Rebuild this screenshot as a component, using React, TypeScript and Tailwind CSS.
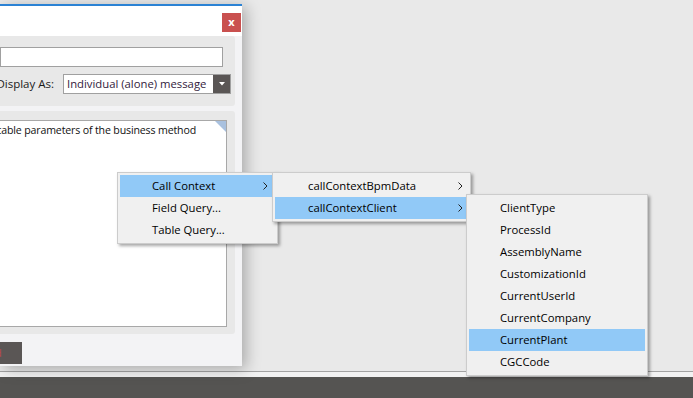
const font = { fontFamily: '"Open Sans", "Noto Sans", sans-serif' }

function Chevron() {
  return (
    <svg width="5" height="8" viewBox="0 0 5 8" className="shrink-0">
      <polyline points="0.5,0.5 4,4 0.5,7.5" fill="none" stroke="#222" strokeWidth="1" />
    </svg>
  )
}

interface Item {
  label: string
  active?: boolean
  sub?: boolean
}

function Menu({ items, className, textPad, arrowPad }: { items: Item[]; className: string; textPad: string; arrowPad: string }) {
  return (
    <div className={`absolute bg-[#f0f0f0] border border-[#cccccc] p-[2px] shadow-[2px_2px_3px_rgba(0,0,0,0.35)] ${className}`}>
      {items.map((it) => (
        <div
          key={it.label}
          className={`h-[22px] flex items-center justify-between text-[11.3px] text-black ${textPad} ${arrowPad} ${it.active ? "bg-[#91c9f7]" : ""}`}
        >
          <span className="whitespace-nowrap">{it.label}</span>
          {it.sub && <Chevron />}
        </div>
      ))}
    </div>
  )
}

export default function App() {
  return (
    <div className="relative w-[693px] h-[398px] bg-[#e9e9e9] overflow-hidden flex flex-col" style={font}>
      <div className="flex-1" />
      <div className="h-px bg-[#a3a3a3]" />
      <div className="h-[5px] bg-[#f2f2f2]" />
      <div className="h-[21px] bg-[#555452]" />

      {/* dialog window */}
      <div className="absolute left-0 top-[4px] w-[242px] h-[362px] bg-[#f3f3f5] border-t-2 border-[#2b82d4] shadow-[4px_3px_14px_rgba(0,0,0,0.28)] overflow-hidden flex flex-col">
        <div className="h-[30px] bg-white flex justify-end items-start pt-[7px] pr-px shrink-0">
          <div className="w-[19px] h-[19px] bg-[#c9504f] flex items-center justify-center text-white text-[11px] font-bold leading-none pb-[2px]">
            x
          </div>
        </div>

        <div className="pr-[7px] flex flex-col">
          <div className="h-[70px] bg-[#e8e8e8] rounded-r-[3px] flex flex-col pt-[11px]">
            <div className="h-[20px] mr-[12px] bg-white border border-[#a0a0a0]" />
            <div className="mt-[7px] flex items-center justify-end pr-[4px]">
              <span className="shrink-0 whitespace-nowrap text-[11.5px] text-[#1a1a1a]">Display As:</span>
              <div className="ml-[9px] w-[168px] h-[20px] bg-white border border-[#a0a0a0] flex items-stretch shrink-0">
                <span className="flex-1 pl-[3px] text-[11.3px] leading-[18px] text-[#321a3c] whitespace-nowrap overflow-hidden">Individual (alone) message</span>
                <div className="w-[17px] bg-[#5a5655] flex items-center justify-center shrink-0">
                  <svg width="6" height="4" viewBox="0 0 6 4">
                    <polygon points="0,0 6,0 3,3.5" fill="#fff" />
                  </svg>
                </div>
              </div>
            </div>
          </div>

          <div className="mt-[5px] h-[223px] bg-[#e8e8e8] rounded-r-[3px] pt-[9px] pr-[8px]">
            <div className="relative h-[207px] bg-white border border-[#a8a8a8] border-l-0">
              <div className="flex justify-end pr-[30px] pt-[2px] text-[10.6px] tracking-[-0.15px] text-[#111] whitespace-nowrap">
                <span className="shrink-0">Specify values of call context, field and table parameters of the business method</span>
              </div>
              <svg width="11" height="11" viewBox="0 0 11 11" className="absolute top-0 right-0">
                <polygon points="0,0 11,0 11,11" fill="#a9c1df" />
              </svg>
            </div>
          </div>
        </div>

        <div className="mt-[8px] flex">
          <div className="w-[22px] h-[22px] bg-[#5a5655] flex items-center overflow-hidden">
            <span className="text-[11px] text-[#b84848] -ml-[5px]">d</span>
          </div>
        </div>
      </div>

      <Menu
        className="left-[117px] top-[172px] w-[161px]"
        textPad="pl-[32px]"
        arrowPad="pr-[7px]"
        items={[{ label: "Call Context", active: true, sub: true }, { label: "Field Query..." }, { label: "Table Query..." }]}
      />
      <Menu
        className="left-[272px] top-[172px] w-[199px]"
        textPad="pl-[33px]"
        arrowPad="pr-[5px]"
        items={[{ label: "callContextBpmData", sub: true }, { label: "callContextClient", active: true, sub: true }]}
      />
      <Menu
        className="left-[466px] top-[194px] w-[182px]"
        textPad="pl-[31px]"
        arrowPad="pr-[5px]"
        items={[
          { label: "ClientType" },
          { label: "ProcessId" },
          { label: "AssemblyName" },
          { label: "CustomizationId" },
          { label: "CurrentUserId" },
          { label: "CurrentCompany" },
          { label: "CurrentPlant", active: true },
          { label: "CGCCode" },
        ]}
      />
    </div>
  )
}
